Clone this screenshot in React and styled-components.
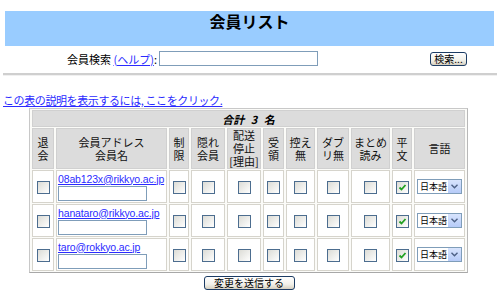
import React from "react";
import styled, { createGlobalStyle } from "styled-components";

const Global = createGlobalStyle`
  html, body {
    margin: 0;
    padding: 0;
    background: #ffffff;
    font-family: "Noto Sans CJK JP", "Liberation Sans", sans-serif;
    color: #000000;
  }
`;

const Page = styled.div`
  width: 500px;
  height: 297px;
  padding-top: 11px;
  box-sizing: border-box;
  overflow: hidden;
`;

const Banner = styled.div`
  margin: 0 6px 0 5px;
  height: 35px;
  background: #99ccff;
  text-align: center;
`;

const Title = styled.h1`
  margin: 0;
  padding-top: 1px;
  font-size: 16px;
  line-height: 19px;
  font-weight: bold;
`;

const SearchRow = styled.div`
  display: flex;
  align-items: center;
  height: 15px;
  margin-top: 5px;
  padding: 0 33px 0 67px;
  font-size: 11px;
`;

const Link = styled.a`
  color: #2b2bff;
  text-decoration: underline;
`;

const TextBox = styled.span`
  display: block;
  box-sizing: border-box;
  width: ${(p) => p.$w}px;
  height: ${(p) => p.$h}px;
  border: 1px solid #7f9db9;
  background: #ffffff;
  margin-left: ${(p) => p.$ml || 0}px;
`;

const XpButton = styled.button`
  box-sizing: border-box;
  width: ${(p) => p.$w}px;
  height: 14px;
  padding: 0;
  margin-left: ${(p) => (p.$auto ? "auto" : "0")};
  border: 1px solid #1c3c64;
  border-radius: 3px;
  background: linear-gradient(#ffffff, #f2f1ea 60%, #d6d0c0);
  font-family: "Noto Sans CJK JP", sans-serif;
  font-size: 10px;
  line-height: 12px;
  color: #000;
`;

const Rule = styled.div`
  margin: 7px 3px 0 3px;
  height: 2px;
  background: #cfcfcf;
  border-bottom: 1px solid #f0f0f0;
`;

const InfoLink = styled(Link)`
  display: block;
  margin: 18px 0 0 3px;
  font-size: 11px;
  line-height: 13px;
  letter-spacing: -0.4px;
  width: max-content;
`;

const MemberTable = styled.table`
  margin: 1px 0 0 29px;
  border-collapse: separate;
  border-spacing: 2px 1px;
  border: 1px solid #c8c8c8;
  border-right-color: #b8b8b8;
  border-bottom-color: #a8a8a8;
  background: #fbfbf8;
  font-size: 11px;
  line-height: 13px;
`;

const Caption = styled.td`
  box-sizing: border-box;
  height: 17px;
  padding: 0;
  background: #dcdcdc;
  border: 1px solid #d0d0d0;
  text-align: center;
  font-weight: bold;
  font-style: italic;
  font-size: 11px;
  line-height: 14px;
  word-spacing: 4px;
`;

const Head = styled.th`
  box-sizing: border-box;
  width: ${(p) => p.$w}px;
  height: 41px;
  padding: 0;
  background: #dcdcdc;
  border: 1px solid #d0d0d0;
  font-weight: normal;
  text-align: center;
  vertical-align: middle;
  font-size: 11px;
  line-height: 13px;
  color: #111;
`;

const Cell = styled.td`
  box-sizing: border-box;
  height: 33px;
  padding: 0 ${(p) => (p.$left ? 1 : 0)}px;
  border: 1px solid #d6d4cc;
  background: #ffffff;
  text-align: ${(p) => (p.$left ? "left" : "center")};
  vertical-align: middle;
  white-space: nowrap;
`;

const Mail = styled(Link)`
  display: block;
  font-family: "Liberation Sans", sans-serif;
  font-size: 10.5px;
  letter-spacing: -0.15px;
  line-height: 12px;
  margin-bottom: 1px;
  white-space: nowrap;
`;

const Box = styled.span`
  display: inline-block;
  box-sizing: border-box;
  width: 13px;
  height: 13px;
  border: 1px solid #4c6d8f;
  background: linear-gradient(135deg, #dcdcd6, #f4f4f2 70%, #ffffff);
  vertical-align: middle;
  position: relative;

  svg {
    position: absolute;
    left: 1px;
    top: 1px;
  }
`;

const Dropdown = styled.span`
  display: inline-flex;
  box-sizing: border-box;
  width: 45px;
  height: 15px;
  border: 1px solid #7f9db9;
  background: #ffffff;
  vertical-align: middle;
  text-align: left;
`;

const DropText = styled.span`
  flex: 1;
  padding-left: 2px;
  font-size: 9px;
  line-height: 13px;
  white-space: nowrap;
  overflow: hidden;
`;

const DropArrow = styled.span`
  flex: none;
  width: 13px;
  height: 13px;
  background: linear-gradient(#d8e4fd, #b6cbf8);
  display: flex;
  align-items: center;
  justify-content: center;
`;

const SubmitRow = styled.div`
  display: flex;
  justify-content: center;
  margin-top: 3px;
  padding-right: 2px;
`;

function CheckBox({ checked }) {
  return (
    <Box>
      {checked && (
        <svg width="9" height="9" viewBox="0 0 9 9">
          <path d="M1.5 4.5 L3.5 6.5 L7.5 2" fill="none" stroke="#21a121" strokeWidth="1.8" />
        </svg>
      )}
    </Box>
  );
}

const members = ["08ab123x@rikkyo.ac.jp", "hanataro@rikkyo.ac.jp", "taro@rokkyo.ac.jp"];

const heads = [
  { w: 22, t: ["退", "会"] },
  { w: 111, t: ["会員アドレス", "会員名"] },
  { w: 20, t: ["制", "限"] },
  { w: 34, t: ["隠れ", "会員"] },
  { w: 34, t: ["配送", "停止", "[理由]"] },
  { w: 21, t: ["受", "領"] },
  { w: 29, t: ["控え", "無"] },
  { w: 32, t: ["ダブ", "リ無"] },
  { w: 39, t: ["まとめ", "読み"] },
  { w: 20, t: ["平", "文"] },
  { w: 51, t: ["言語"] },
];

export default function App() {
  return (
    <Page>
      <Global />
      <Banner>
        <Title>会員リスト</Title>
      </Banner>
      <SearchRow>
        <span>
          会員検索 <Link href="#">(ヘルプ)</Link>:
        </span>
        <TextBox $w={159} $h={15} $ml={2} />
        <XpButton $w={37} $auto>
          検索...
        </XpButton>
      </SearchRow>
      <Rule />
      <InfoLink href="#">この表の説明を表示するには, ここをクリック.</InfoLink>
      <MemberTable>
        <tbody>
          <tr>
            <Caption colSpan={11}>合計 3 名</Caption>
          </tr>
          <tr>
            {heads.map((h, i) => (
              <Head key={i} $w={h.w}>
                {h.t.map((line, j) => (
                  <React.Fragment key={j}>
                    {j > 0 && <br />}
                    {line}
                  </React.Fragment>
                ))}
              </Head>
            ))}
          </tr>
          {members.map((m) => (
            <tr key={m}>
              <Cell>
                <CheckBox />
              </Cell>
              <Cell $left>
                <Mail href="#">{m}</Mail>
                <TextBox $w={89} $h={15} />
              </Cell>
              {[0, 1, 2, 3, 4, 5, 6].map((k) => (
                <Cell key={k}>
                  <CheckBox />
                </Cell>
              ))}
              <Cell>
                <CheckBox checked />
              </Cell>
              <Cell>
                <Dropdown>
                  <DropText>日本語</DropText>
                  <DropArrow>
                    <svg width="7" height="5" viewBox="0 0 7 5">
                      <path d="M0.5 0.8 L3.5 3.8 L6.5 0.8" fill="none" stroke="#4d6185" strokeWidth="1.4" />
                    </svg>
                  </DropArrow>
                </Dropdown>
              </Cell>
            </tr>
          ))}
        </tbody>
      </MemberTable>
      <SubmitRow>
        <XpButton $w={91}>変更を送信する</XpButton>
      </SubmitRow>
    </Page>
  );
}
